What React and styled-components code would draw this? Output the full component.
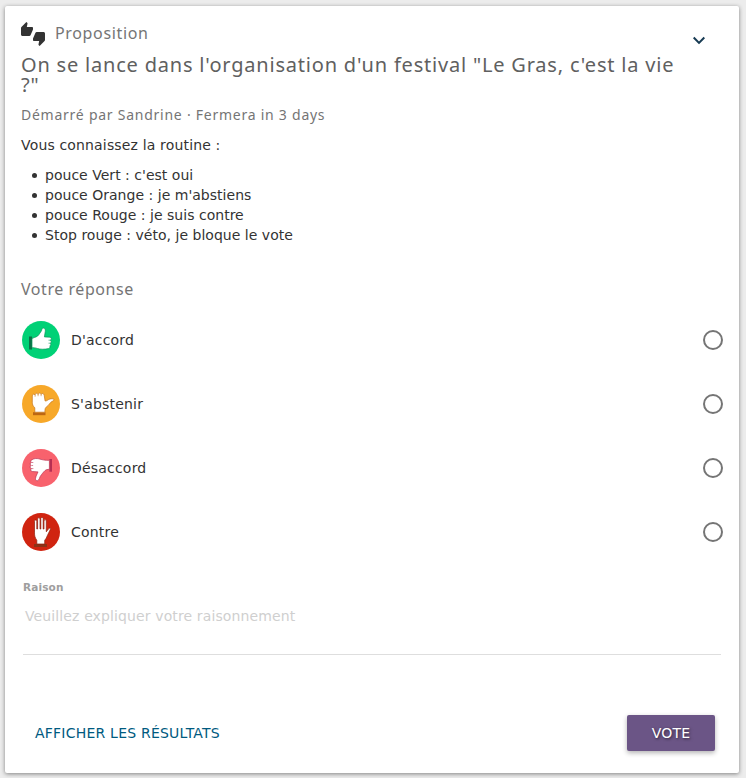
import { useState } from "react";
import styled, { createGlobalStyle } from "styled-components";

const GlobalStyle = createGlobalStyle`
    *{
        box-sizing: border-box;
    }
    body{
        margin: 0;
        background: #ececec;
        color: #333;
        font-family: "DejaVu Sans", sans-serif;
        font-size: 14px;
        line-height: 20px;
    }
`;
const Page = styled.div`
    padding: 6px 7px 5px 5px;
    height: 778px;
`
const Card = styled.main`
    display: flex;
    flex-direction: column;
    height: 767px;
    padding: 16px;
    background: #fff;
    border-radius: 2px;
    box-shadow: 0 1px 4px rgba(0, 0, 0, 0.45);
`
const Header = styled.header`
    display: flex;
    align-items: flex-start;
    height: 33px;
`
const Kind = styled.h2`
    flex: 1;
    margin: 1px 0 0 10px;
    color: #757575;
    font: 400 16px/20px "Noto Sans", sans-serif;
    letter-spacing: 0.65px;
`
const MenuButton = styled.button`
    display: flex;
    margin: 7px 18px 0 0;
    padding: 0;
    background: none;
    border: 0;
`
const Title = styled.h1`
    margin: 0 32px 0 0;
    color: #606060;
    font: 400 20px/20px "Noto Sans", sans-serif;
    letter-spacing: 0.8px;
`
const Started = styled.p`
    margin: 10px 0 0;
    color: #757575;
    font: 400 14px/20px "Noto Sans", sans-serif;
    letter-spacing: 0.75px;
`
const Intro = styled.p`
    margin: 10px 0;
    letter-spacing: 0.16px;
`
const Rules = styled.ul`
    margin: 0;
    padding: 0 0 0 11px;
    list-style: none;
`
const Rule = styled.li`
    display: flex;
    align-items: center;
    gap: 8px;
    letter-spacing: 0.02px;
    &::before{
        content: "";
        width: 5px;
        height: 5px;
        margin-top: 1px;
        border-radius: 50%;
        background: #333;
    }
`
const AnswerTitle = styled.h3`
    margin: 34px 0 20px;
    color: #757575;
    font: 400 16px/20px "Noto Sans", sans-serif;
    letter-spacing: 0.55px;
`
const Option = styled.label`
    display: flex;
    align-items: center;
    height: 38px;
    margin: 2px 0 24px 1px;
    gap: 11px;
`
const OptionName = styled.span`
    flex: 1;
    letter-spacing: 0.2px;
`
const Radio = styled.input`
    appearance: none;
    width: 20px;
    height: 20px;
    margin: 0;
    border: 2px solid #757575;
    border-radius: 50%;
    &:checked{
        background: #6b5586;
        box-shadow: inset 0 0 0 3px #fff;
    }
`
const Reason = styled.label`
    display: flex;
    flex-direction: column;
    margin: 2px 2px 0;
    color: #9e9e9e;
    font-size: 10.5px;
    font-weight: bold;
    letter-spacing: 0.15px;
`
const ReasonInput = styled.textarea`
    height: 58px;
    padding: 9px 2px;
    background: none;
    border: 0;
    border-bottom: 1px solid #dedede;
    outline: none;
    resize: none;
    color: #333;
    font: 400 14px/20px "DejaVu Sans", sans-serif;
    letter-spacing: 0.12px;
    &::placeholder{
        color: #cfcfcf;
    }
`
const Actions = styled.footer`
    display: flex;
    justify-content: space-between;
    margin: 60px 8px 0 6px;
`
const Button = styled.button`
    height: 36px;
    padding: 0 8px;
    background: none;
    border: 0;
    border-radius: 2px;
    color: #005a80;
    font: 400 14px/36px "DejaVu Sans", sans-serif;
    letter-spacing: 0.22px;
    text-transform: uppercase;
`
const VoteButton = styled(Button)`
    width: 88px;
    background: #6b5586;
    color: #fff;
    box-shadow: 0 2px 5px rgba(0, 0, 0, 0.3);
    text-shadow: 1px 1px 3px rgba(0, 0, 0, 0.6);
`

const hands = {
    agree: {
        color: "#00d176",
        line: "#089457",
        cuff: "M7 15.5h3v13H7z",
        cuffColor: "#087347",
        hand: "M10 17.5C13 16 15.5 16 17 13.5l2.5-3.8c.5-1.8.7-2.6 1.9-2.6 1.5 0 2.2 1.5 1.9 3.2l-.9 5.6 5.7.3c1.6.2 1.6 2.7.2 3 1.4.3 1.2 2.8-.1 3 1 .5.8 2.4-.4 2.6.6 1-.1 2.6-1.2 2.8-3.6.8-8.6.9-11.1-.1-1.8-.7-3.3-.8-5.5-.8z",
        folds: "M26.5 19.2h2M26.5 22.2h1.6",
    },
    abstain: {
        color: "#f7a829",
        line: "#c4761c",
        cuff: "M11 27.2h12.5v3H11z",
        cuffColor: "#bd6712",
        hand: "M12.8 27.2v-4.4c-1.8-1.8-2.5-3.2-2.5-5.5v-6.4c0-2 2.2-2.2 2.8-.7 0-2.4 2.6-2.4 3-.5.2-2.1 2.7-2.1 3-.1.5-1.7 2.9-1.4 3.1.6l.9 5.8c1.3.3 2.8-1.1 3.9-1.7 1.2-.6 2.8-.7 4-.5 1.5.3 1.1 1.8-.1 2.2-3.1 1-3.7 4.5-6.8 6.2-.9.7-1.2 1.8-1.2 5z",
        folds: "M13.1 10.2v1.5M16.1 9.7v1.5M19.1 9.7v1.5",
    },
    disagree: {
        color: "#f8626d",
        line: "#b93251",
        cuff: "M27.4 10h2.6v12.7h-2.6z",
        cuffColor: "#b72f52",
        hand: "M27.4 11.3v9c-1.9.2-3.3.3-4.3 1.2-1.7 1.6-3.2 3.5-4.9 6-.6 1.3-1 3-2 3.9-1.2 1-2.9 0-2.7-1.9.3-2.3 1.6-4.4 2.5-6.6l-5.8-.4c-1.7-.2-2-2.4-.7-2.9-1.8-.2-1.9-2.8-.4-3.1-1.3-.5-1.2-2.8.2-3-1-.6-.7-2.7.9-2.8 1.6-1.3 4.6-1.4 6.6-.9 2.9.9 6.3 1.7 10.6 1.5z",
        folds: "M9.5 13.5h1.8M9.3 16.5h1.8M9.6 19.6h1.8",
    },
    block: {
        color: "#d02410",
        line: "#8c210e",
        cuff: "M12 31h13v3H12z",
        cuffColor: "#8c3217",
        hand: "M14.8 31v-3.7c-1.8-2.7-2.3-4.4-2.3-7.4V8.4c0-1.8 2.3-1.8 2.3 0V16h.8V6.3c0-2 2.4-2 2.4 0V16h.8V5.9c0-2 2.4-2 2.4 0V16h.8V8c0-1.9 2.3-1.9 2.3 0v10.8l2.3-3c1-1.3 2.4-.6 1.7.8l-3.1 6.3c-.6 1.8-1.3 3-2.5 4.4V31z",
        folds: "",
    },
}

const HandIcon = ({ type }) => {
    const item = hands[type]
    return (
        <svg width="38" height="38" viewBox="0 0 38 38">
            <circle cx="19" cy="19" r="19" fill={item.color} />
            <path d={item.cuff} fill={item.cuffColor} />
            <path d={item.hand} fill="#fff" stroke={item.line} strokeWidth="0.7" />
            <path d={item.folds} fill="none" stroke={item.line} strokeWidth="0.6" />
        </svg>
    )
}

const ThumbsIcon = () => (
    <svg width="24" height="24" viewBox="0 0 24 24" fill="#333">
        <path d="M12 6c0-.55-.45-1-1-1H5.82l.66-3.18.02-.23c0-.31-.13-.59-.33-.8L5.38 0 .44 4.94C.17 5.21 0 5.59 0 6v6.5c0 .83.67 1.5 1.5 1.5h6.75c.62 0 1.15-.38 1.38-.91l2.26-5.29c.07-.17.11-.36.11-.55V6zm10.5 4h-6.75c-.62 0-1.15.38-1.38.91l-2.26 5.29c-.07.17-.11.36-.11.55V18c0 .55.45 1 1 1h5.18l-.66 3.18-.02.24c0 .31.13.59.33.8l.79.78 4.94-4.94c.27-.27.44-.65.44-1.06v-6.5c0-.83-.67-1.5-1.5-1.5z" />
    </svg>
)

const rules = [
    "pouce Vert : c'est oui",
    "pouce Orange : je m'abstiens",
    "pouce Rouge : je suis contre",
    "Stop rouge : véto, je bloque le vote",
]
const options = [
    { type: "agree", name: "D'accord" },
    { type: "abstain", name: "S'abstenir" },
    { type: "disagree", name: "Désaccord" },
    { type: "block", name: "Contre" },
]

const App = () => {
    const [vote, setVote] = useState("")
    return (
        <Page>
            <GlobalStyle />
            <Card>
                <Header>
                    <ThumbsIcon />
                    <Kind>Proposition</Kind>
                    <MenuButton>
                        <svg width="12" height="24" viewBox="6 0 12 24" fill="#173b53">
                            <path d="M7.41 7.84 12 12.42l4.59-4.58L18 9.25l-6 6-6-6z" />
                        </svg>
                    </MenuButton>
                </Header>
                <Title>On se lance dans l'organisation d'un festival "Le Gras, c'est la vie ?"</Title>
                <Started>Démarré par Sandrine · Fermera in 3 days</Started>
                <Intro>Vous connaissez la routine :</Intro>
                <Rules>
                    {rules.map((rule) => <Rule key={rule}>{rule}</Rule>)}
                </Rules>
                <AnswerTitle>Votre réponse</AnswerTitle>
                {options.map(({ type, name }) => (
                    <Option key={type}>
                        <HandIcon type={type} />
                        <OptionName>{name}</OptionName>
                        <Radio type="radio" name="vote" checked={vote === type} onChange={() => setVote(type)} />
                    </Option>
                ))}
                <Reason>
                    Raison
                    <ReasonInput placeholder="Veuillez expliquer votre raisonnement" />
                </Reason>
                <Actions>
                    <Button>Afficher les résultats</Button>
                    <VoteButton>Vote</VoteButton>
                </Actions>
            </Card>
        </Page>
    )
};

export default App;
